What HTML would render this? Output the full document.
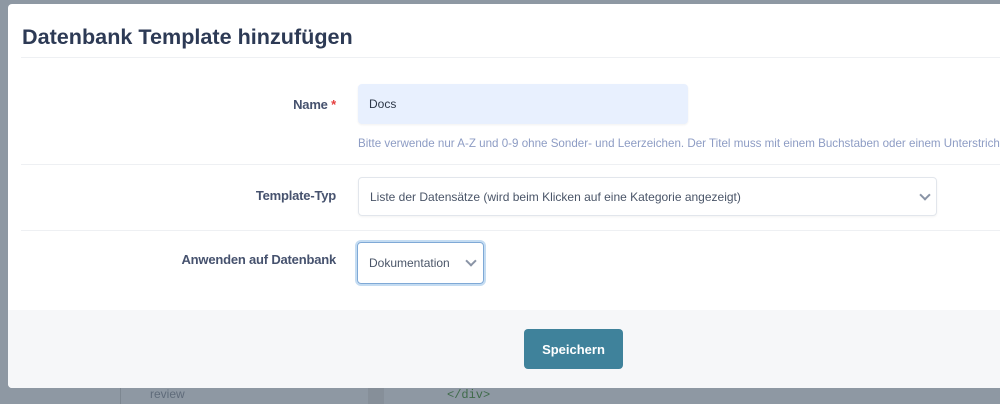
<!DOCTYPE html>
<html><head><meta charset="utf-8"><style>
*{box-sizing:border-box;margin:0;padding:0}
body{width:1000px;height:404px;overflow:hidden;background:#8e98a3;font-family:"Liberation Sans",sans-serif;position:relative}
.bg1{position:absolute;left:120px;top:388px;width:1px;height:16px;background:#7d8791}
.bg2{position:absolute;left:368px;top:388px;width:16px;height:16px;background:#868f99}
.modal{position:absolute;left:8px;top:4px;width:1000px;height:384px;background:#fff;border-radius:4px 0 0 4px;overflow:hidden}
h1{position:absolute;left:14px;top:20px;font-size:21.6px;font-weight:bold;color:#2d3a55}
.hr{position:absolute;left:13px;right:0;height:1px;background:#eef0f3}
.lbl{position:absolute;right:672px;font-size:13px;color:#46526e;font-weight:bold;white-space:nowrap;letter-spacing:-0.2px}
.in{position:absolute;border-radius:4px;font-size:12px;color:#2d3748;padding-left:11px;display:flex;align-items:center}
.help{position:absolute;left:350px;top:133px;font-size:11.6px;color:#8d9cc4;white-space:nowrap}
.chev{position:absolute;width:8px;height:8px;border-right:2px solid #8a94a6;border-bottom:2px solid #8a94a6;transform:rotate(45deg)}
.foot{position:absolute;left:0;right:0;top:306px;bottom:0;background:#f6f7f9}
.btn{position:absolute;left:516px;top:325px;width:99px;height:40px;background:#3f829b;border-radius:4px;color:#fff;font-size:13px;font-weight:bold;display:flex;align-items:center;justify-content:center}
</style></head><body>
<div class="bg1"></div><div class="bg2"></div>
<div style="position:absolute;left:150px;top:387px;font-size:12px;color:#5f6b7a">review</div>
<div style="position:absolute;left:447px;top:388px;font-size:12px;color:#3f6b4a;font-family:'Liberation Mono',monospace">&lt;/div&gt;</div>
<div class="modal">
<h1>Datenbank Template hinzufügen</h1>
<div class="hr" style="top:53px"></div>
<div class="lbl" style="top:93px">Name <span style="color:#e53e3e">*</span></div>
<div class="in" style="left:350px;top:80px;width:330px;height:40px;background:#e8f0fe;box-shadow:0 1px 2px rgba(0,0,0,.06)">Docs</div>
<div class="help">Bitte verwende nur A-Z und 0-9 ohne Sonder- und Leerzeichen. Der Titel muss mit einem Buchstaben oder einem Unterstrich beginnen.</div>
<div class="hr" style="top:160px"></div>
<div class="lbl" style="top:184px">Template-Typ</div>
<div class="in" style="left:350px;top:173px;width:579px;height:39px;border:1px solid #e2e6ec;box-shadow:0 1px 2px rgba(0,0,0,.05);color:#4a5568">Liste der Datensätze (wird beim Klicken auf eine Kategorie angezeigt)</div>
<div class="chev" style="left:913px;top:187px"></div>
<div class="hr" style="top:226px"></div>
<div class="lbl" style="top:248px">Anwenden auf Datenbank</div>
<div class="in" style="left:349px;top:238px;width:127px;height:42px;border:1px solid #7fa9d6;box-shadow:0 0 0 2px #c4dcf2;color:#4a5568">Dokumentation</div>
<div class="chev" style="left:459px;top:253px"></div>
<div class="foot"></div>
<div class="btn">Speichern</div>
</div>
</body></html>
